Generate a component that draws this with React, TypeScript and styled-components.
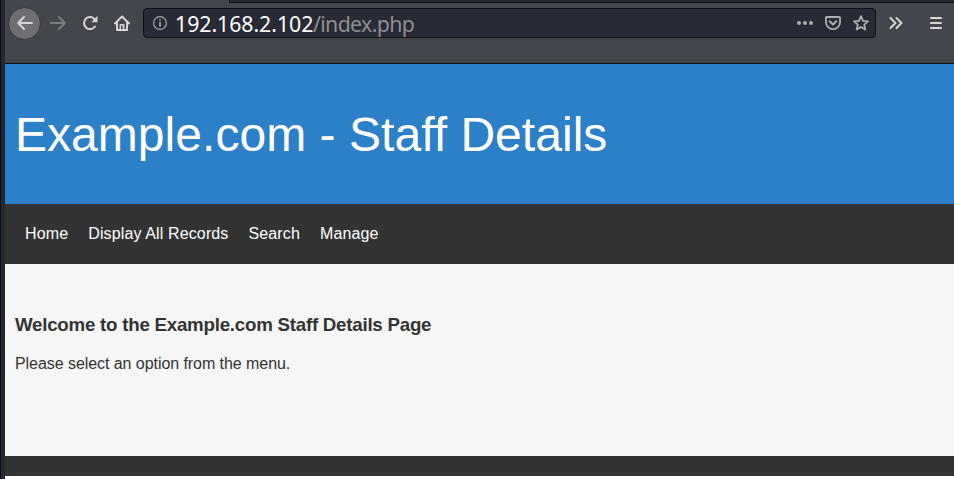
import React from 'react';
import styled, { createGlobalStyle } from 'styled-components';

const GlobalStyle = createGlobalStyle`
  * { box-sizing: border-box; }
  body { margin: 0; overflow: hidden; background: #252731; }
`;

const Window = styled.div`
  width: 954px;
  height: 479px;
  overflow: hidden;
  background: #252731;
  border-left: 1px solid #0c0d12;
  padding-left: 4px;
  display: flex;
  flex-direction: column;
  font-family: 'Liberation Sans', Arial, sans-serif;
`;

const Chrome = styled.header`
  height: 64px;
  flex: none;
  background: #43464d;
  border-bottom: 1px solid #101116;
`;

const TabStrip = styled.div`
  height: 3px;
  margin-left: 224px;
  background: #252731;
  border-left: 1px solid #15161c;
  border-bottom: 1px solid #101116;
`;

const Toolbar = styled.div`
  height: 40px;
  display: flex;
  align-items: center;
`;

const ToolButton = styled.button<{ $width: number; $dim?: boolean }>`
  width: ${(p) => p.$width}px;
  height: 34px;
  flex: none;
  border: 0;
  padding: 0;
  background: none;
  display: flex;
  align-items: center;
  justify-content: center;
  color: ${(p) => (p.$dim ? '#7c7e82' : '#d5d6d3')};
`;

const BackButton = styled(ToolButton)`
  height: 33px;
  margin-left: 3px;
  border: 1px solid #35373d;
  border-radius: 50%;
  background: #6d6f75;
`;

const AddressBar = styled.div`
  width: 733px;
  height: 30px;
  flex: none;
  margin-left: 5px;
  padding: 0 6px 0 8px;
  display: flex;
  align-items: center;
  border: 1px solid #0e0f14;
  border-radius: 4px;
  background: #282a36;
  color: #adaeb0;
`;

const Url = styled.div`
  margin-left: 7px;
  padding-top: 2px;
  flex: 1;
  display: flex;
  font: 21.3px/28px 'Noto Sans', 'Open Sans', sans-serif;
  white-space: pre;
`;

const Host = styled.span`
  width: 138px;
  color: #fff;
  letter-spacing: -0.05px;
`;

const Path = styled.span`
  color: #8e8f91;
  letter-spacing: -0.65px;
`;

const PageActions = styled.div`
  display: flex;
  align-items: center;
  gap: 12px;
`;

const Divider = styled.div`
  width: 1px;
  height: 34px;
  margin-right: 1px;
  background: #6b6d71;
`;

const Banner = styled.div`
  height: 140px;
  flex: none;
  padding: 0 10px;
  background: #2c80c8;
`;

const SiteTitle = styled.h1`
  margin: 0;
  color: #fff;
  font-size: 48px;
  font-weight: 400;
  line-height: 141px;
  letter-spacing: 0.04px;
  white-space: nowrap;
`;

const Nav = styled.nav`
  height: 60px;
  flex: none;
  padding: 0 20px;
  display: flex;
  align-items: center;
  gap: 20px;
  background: #333;
`;

const NavLink = styled.a`
  color: #fff;
  font-size: 16px;
  line-height: 20px;
  letter-spacing: 0.13px;
  text-decoration: none;
`;

const Content = styled.main`
  height: 192px;
  flex: none;
  padding: 50px 10px 0;
  background: #f6f6f6;
  color: #333;
`;

const Heading = styled.h3`
  margin: 0;
  font-size: 18.72px;
  line-height: 21px;
  letter-spacing: -0.235px;
`;

const Message = styled.p`
  margin: 19px 0 0;
  font-size: 16px;
  line-height: 19px;
  letter-spacing: -0.06px;
`;

const FooterBar = styled.footer`
  height: 20px;
  flex: none;
  background: #333;
`;

const PageEnd = styled.div`
  flex: 1;
  background: #fff;
`;

const Icon = styled.svg`
  display: block;
  flex: none;
  fill: none;
  stroke: currentColor;
  stroke-width: 2;
  stroke-linecap: round;
  stroke-linejoin: round;
`;

const icon16 = { width: 16, height: 16, viewBox: '0 0 16 16' };

const BackIcon = () => (
  <Icon {...icon16}><path d="M15 8H1.5M7 2 1.2 8 7 14" /></Icon>
);
const ForwardIcon = () => (
  <Icon {...icon16}><path d="M1 8h13.5M9 2l5.8 6L9 14" /></Icon>
);
const ReloadIcon = () => (
  <Icon {...icon16}>
    <path d="M13 11.5A6 6 0 1 1 12.7 4.3" />
    <path d="M15.5.8v6.4H9.2z" fill="currentColor" stroke="none" />
  </Icon>
);
const HomeIcon = () => (
  <Icon {...icon16}>
    <path d="M1 8.5 8 1.5l7 7M3 8v7h10V8" />
    <path d="M6.3 15V9.7h3.4V15" strokeWidth="1.5" />
    <path d="M8.3 12h.1" strokeWidth="1" />
  </Icon>
);
const InfoIcon = () => (
  <Icon {...icon16}>
    <circle cx="8" cy="8" r="6.4" strokeWidth="1.1" />
    <path d="M8 7.5v3.7" strokeWidth="1.6" />
    <path d="M8 4.8v.1" strokeWidth="1.8" />
  </Icon>
);
const DotsIcon = () => (
  <Icon {...icon16}>
    <g fill="currentColor" stroke="none">
      <circle cx="2" cy="8" r="2" />
      <circle cx="8" cy="8" r="2" />
      <circle cx="14" cy="8" r="2" />
    </g>
  </Icon>
);
const PocketIcon = () => (
  <Icon {...icon16}>
    <path d="M1.7 2h12.6a.7.7 0 0 1 .7.7v4.5a7 7 0 0 1-14 0V2.7a.7.7 0 0 1 .7-.7z" strokeWidth="1.8" />
    <path d="m4.7 6.3 3.3 3.2 3.3-3.2" />
  </Icon>
);
const StarIcon = () => (
  <Icon {...icon16}>
    <path d="m8 1.2 2 4.6 5 .5-3.8 3.3 1.1 5L8 12l-4.3 2.6 1.1-5L1 6.3l5-.5z" strokeWidth="1.8" />
  </Icon>
);
const OverflowIcon = () => (
  <Icon {...icon16}><path d="m2.5 3 5 5-5 5M8.5 3l5 5-5 5" /></Icon>
);
const MenuIcon = () => (
  <Icon {...icon16}>
    <path d="M3 3h10M3 8h10M3 13h10" />
  </Icon>
);

const links = ['Home', 'Display All Records', 'Search', 'Manage'];

export default function App() {
  return (
    <>
      <GlobalStyle />
      <Window>
        <Chrome>
          <TabStrip />
          <Toolbar>
            <BackButton $width={33} aria-label="Back"><BackIcon /></BackButton>
            <ToolButton $width={33} $dim aria-label="Forward"><ForwardIcon /></ToolButton>
            <ToolButton $width={32} aria-label="Reload"><ReloadIcon /></ToolButton>
            <ToolButton $width={32} aria-label="Home"><HomeIcon /></ToolButton>
            <AddressBar>
              <InfoIcon />
              <Url>
                <Host>192.168.2.102</Host>
                <Path>/index.php</Path>
              </Url>
              <PageActions>
                <DotsIcon />
                <PocketIcon />
                <StarIcon />
              </PageActions>
            </AddressBar>
            <ToolButton $width={40} aria-label="More tools"><OverflowIcon /></ToolButton>
            <Divider />
            <ToolButton $width={38} aria-label="Menu"><MenuIcon /></ToolButton>
          </Toolbar>
        </Chrome>
        <Banner>
          <SiteTitle>Example.com - Staff Details</SiteTitle>
        </Banner>
        <Nav>
          {links.map((label) => (
            <NavLink key={label}>{label}</NavLink>
          ))}
        </Nav>
        <Content>
          <Heading>Welcome to the Example.com Staff Details Page</Heading>
          <Message>Please select an option from the menu.</Message>
        </Content>
        <FooterBar />
        <PageEnd />
      </Window>
    </>
  );
}
